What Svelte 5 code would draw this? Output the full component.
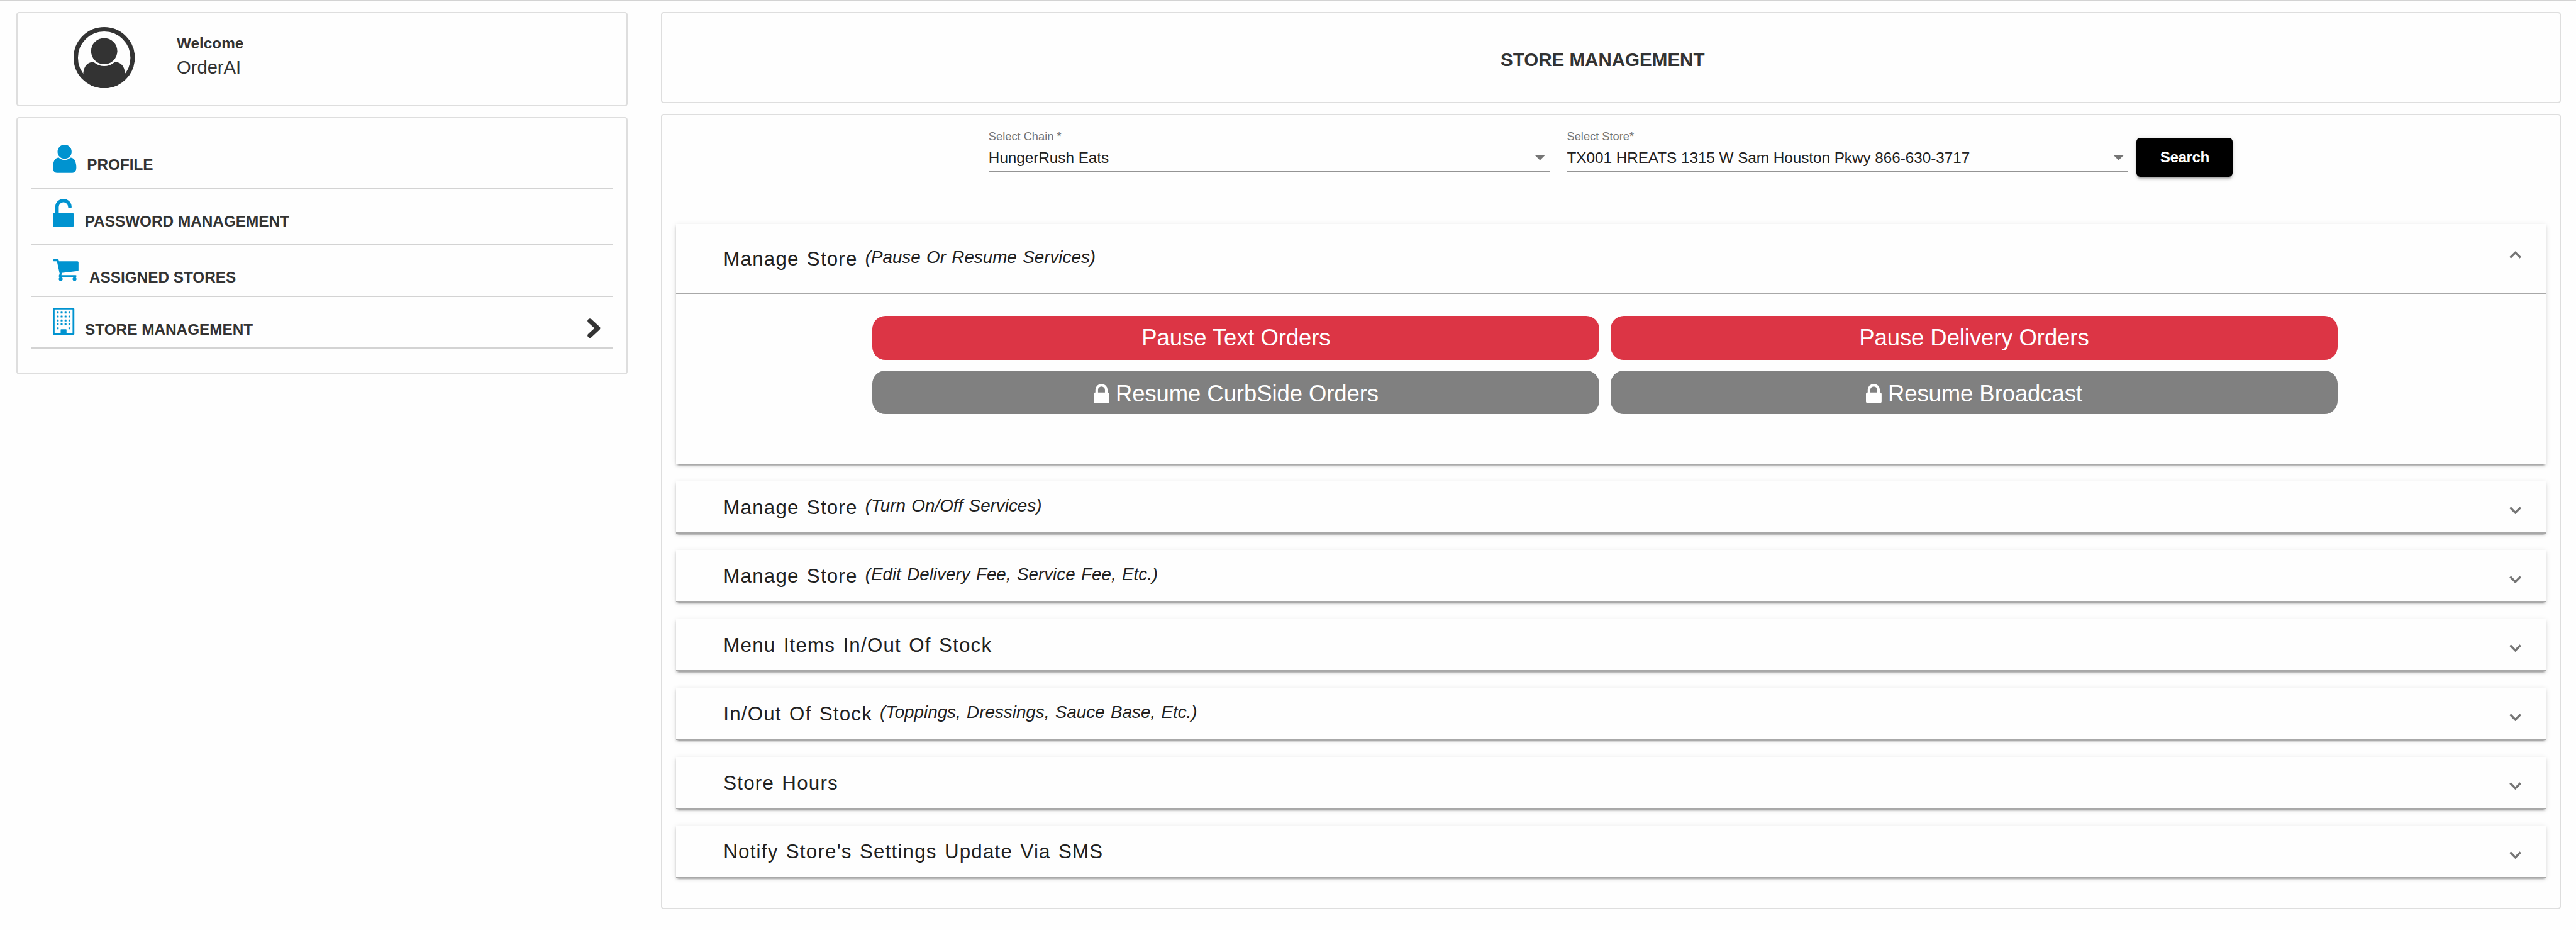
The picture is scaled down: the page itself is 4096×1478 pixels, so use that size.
<script>
  const menu = [
    { id: 'profile', label: 'PROFILE' },
    { id: 'password', label: 'PASSWORD MANAGEMENT' },
    { id: 'stores', label: 'ASSIGNED STORES' },
    { id: 'management', label: 'STORE MANAGEMENT', active: true },
  ];

  const windows = [256, 512, 768, 1024, 1280].flatMap((y) =>
    [256, 512, 768, 1024]
      .filter((x) => y < 1280 || x === 256 || x === 1024)
      .map((x) => ({ x, y }))
  );

  const fields = [
    { label: 'Select Chain *', value: 'HungerRush Eats' },
    { label: 'Select Store*', value: 'TX001 HREATS 1315 W Sam Houston Pkwy 866-630-3717' },
  ];

  const services = [
    { label: 'Pause Text Orders', locked: false },
    { label: 'Pause Delivery Orders', locked: false },
    { label: 'Resume CurbSide Orders', locked: true },
    { label: 'Resume Broadcast', locked: true },
  ];

  const panels = [
    { title: 'Manage Store', note: '(Pause Or Resume Services)', open: true },
    { title: 'Manage Store', note: '(Turn On/Off Services)' },
    { title: 'Manage Store', note: '(Edit Delivery Fee, Service Fee, Etc.)' },
    { title: 'Menu Items In/Out Of Stock' },
    { title: 'In/Out Of Stock', note: '(Toppings, Dressings, Sauce Base, Etc.)' },
    { title: 'Store Hours' },
    { title: "Notify Store's Settings Update Via SMS" },
  ];
</script>

<div class="page">
  <aside class="sidebar">
    <section class="card welcome">
      <svg class="avatar" viewBox="0 0 112 112">
        <circle cx="56" cy="56" r="52" fill="none" stroke="currentColor" stroke-width="8" />
        <circle cx="56" cy="44" r="24" />
        <path d="M17.7 84C19 72 25 64 35 64q2 0 3.5 1.3A28 28 0 0 0 73.5 65.3Q75 64 77 64c10 0 16 8 17.3 20L92 94A52 52 0 0 1 20 94Z" />
      </svg>
      <div class="who">
        <strong>Welcome</strong>
        <span>OrderAI</span>
      </div>
    </section>

    <nav class="card menu">
      {#each menu as item}
        <a class="item {item.id}">
          {#if item.id === 'profile'}
            <svg class="icon" viewBox="256 128 1280 1536"><path d="M1536 1399q0 109-62.5 187t-150.5 78h-854q-88 0-150.5-78t-62.5-187q0-85 8.5-160.5t31.5-152 58.5-131 94-89 134.5-34.5q131 128 313 128t313-128q76 0 134.5 34.5t94 89 58.5 131 31.5 152 8.5 160.5zm-256-887q0 159-112.5 271.5t-271.5 112.5-271.5-112.5-112.5-271.5 112.5-271.5 271.5-112.5 271.5 112.5 112.5 271.5z" /></svg>
          {:else if item.id === 'password'}
            <svg class="icon" viewBox="320 0 1152 1536"><path d="M1376 768q40 0 68 28t28 68v576q0 40-28 68t-68 28h-960q-40 0-68-28t-28-68v-576q0-40 28-68t68-28h32v-320q0-185 131.5-316.5t316.5-131.5 316.5 131.5 131.5 316.5q0 26-19 45t-45 19h-64q-26 0-45-19t-19-45q0-106-75-181t-181-75-181 75-75 181v320h736z" /></svg>
          {:else if item.id === 'stores'}
            <svg class="icon" viewBox="64 256 1664 1408"><path d="M704 1536q0 52-38 90t-90 38-90-38-38-90 38-90 90-38 90 38 38 90zm896 0q0 52-38 90t-90 38-90-38-38-90 38-90 90-38 90 38 38 90zm128-1088v512q0 24-16.5 42.5t-40.5 21.5l-1044 122q13 60 13 70 0 16-24 64h920q26 0 45 19t19 45-19 45-45 19h-1024q-26 0-45-19t-19-45q0-11 8-31.5t16-36 21.5-40 15.5-29.5l-177-823h-204q-26 0-45-19t-19-45 19-45 45-19h256q16 0 28.5 6.5t19.5 15.5 13 24.5 8 26 5.5 29.5 4.5 26h1201q26 0 45 19t19 45z" /></svg>
          {:else}
            <svg class="icon" viewBox="0 0 1408 1792">
              <rect x="58" y="58" width="1292" height="1676" rx="24" fill="none" stroke="currentColor" stroke-width="116" />
              <path d="M512 1440q0-32 32-32h320q32 0 32 32v270h-384z" />
              {#each windows as w}
                <rect x={w.x} y={w.y} width="128" height="128" rx="26" />
              {/each}
            </svg>
          {/if}
          <span>{item.label}</span>
          {#if item.active}
            <svg class="current" viewBox="0 0 24 36"><path d="M4.6 4.6L19.2 18L4.6 31.4" fill="none" stroke="currentColor" stroke-width="8.4" stroke-linecap="round" stroke-linejoin="round" /></svg>
          {/if}
        </a>
      {/each}
    </nav>
  </aside>

  <main class="main">
    <header class="card title">STORE MANAGEMENT</header>

    <section class="card content">
      <form class="filters">
        {#each fields as field}
          <div class="field">
            <span class="label">{field.label}</span>
            <div class="value">
              <span>{field.value}</span>
              <svg class="caret" viewBox="0 0 20 10"><path d="M0 0h20L10 10z" /></svg>
            </div>
          </div>
        {/each}
        <button type="button" class="search">Search</button>
      </form>

      <div class="accordion">
        {#each panels as panel}
          <article class="panel" class:open={panel.open}>
            <div class="head">
              <span class="name">{panel.title}</span>
              {#if panel.note}<em>{panel.note}</em>{/if}
              <svg class="chevron" viewBox="0 0 22 14"><path d="M1.6 1.8L11 11.2L20.4 1.8" fill="none" stroke="currentColor" stroke-width="4" /></svg>
            </div>
            {#if panel.open}
              <div class="services">
                {#each services as service}
                  <button type="button" class="service" class:locked={service.locked}>
                    {#if service.locked}
                      <svg class="lock" viewBox="320 128 1152 1408"><path d="M640 768h512v-192q0-106-75-181t-181-75-181 75-75 181v192zm832 96v576q0 40-28 68t-68 28h-960q-40 0-68-28t-28-68v-576q0-40 28-68t68-28h32v-192q0-184 132-316t316-132 316 132 132 316v192h32q40 0 68 28t28 68z" /></svg>
                    {/if}
                    <span>{service.label}</span>
                  </button>
                {/each}
              </div>
            {/if}
          </article>
        {/each}
      </div>
    </section>
  </main>
</div>

<style>
  /* The layout is drawn on a 4712-unit wide grid: 1rem equals 100 units. */
  :global(html) {
    font-size: calc(100vw / 47.12);
  }
  :global(body) {
    background: #fefefe;
    overflow: hidden;
  }
  .page,
  .page :global(*) {
    box-sizing: border-box;
  }
  .page {
    display: flex;
    align-items: flex-start;
    gap: 0.61rem;
    height: 17rem;
    padding: 0.2rem 0.28rem 0 0.3rem;
    border-top: 2px solid #d3d3d3;
    font-family: 'Liberation Sans', Arial, sans-serif;
    font-size: 0.28rem;
    line-height: 1;
    color: #333;
    white-space: nowrap;
  }
  svg {
    display: block;
    flex: none;
    fill: currentColor;
  }
  button {
    border: 0;
    margin: 0;
    padding: 0;
    font: inherit;
    color: #fff;
  }
  .card {
    border: 2px solid #dedede;
    border-radius: 0.05rem;
  }
  .sidebar {
    display: flex;
    flex: none;
    flex-direction: column;
    gap: 0.2rem;
    width: 11.18rem;
  }
  .welcome {
    display: flex;
    height: 1.72rem;
    padding: 0.25rem 1.02rem;
    gap: 0.77rem;
  }
  .avatar {
    width: 1.12rem;
    height: 1.12rem;
  }
  .who {
    display: flex;
    flex-direction: column;
    padding-top: 0.163rem;
    gap: 0.128rem;
  }
  .who span {
    font-size: 0.336rem;
  }
  .menu {
    height: 4.7rem;
    padding: 0 0.25rem;
  }
  .item {
    display: flex;
    align-items: flex-end;
    height: 1.03rem;
    padding: 0 0.222rem 0.267rem 0.397rem;
    border-bottom: 2px solid #d3d3d3;
    font-weight: bold;
  }
  .item.profile {
    height: 1.28rem;
  }
  .item.stores,
  .item.management {
    height: 0.95rem;
    padding-bottom: 0.187rem;
  }
  .icon {
    color: #0093d0;
  }
  .profile .icon {
    width: 0.43rem;
    height: 0.515rem;
    margin: 0 0.19rem -0.01rem 0;
  }
  .password .icon {
    width: 0.388rem;
    height: 0.514rem;
    margin: 0 0.192rem 0.033rem 0;
  }
  .stores .icon {
    width: 0.47rem;
    height: 0.398rem;
    margin: 0 0.193rem 0.075rem 0;
  }
  .management .icon {
    width: 0.394rem;
    height: 0.502rem;
    margin: 0 0.19rem 0.04rem 0;
  }
  .current {
    width: 0.24rem;
    height: 0.36rem;
    margin: 0 0 -0.017rem auto;
  }
  .main {
    display: flex;
    flex: 1;
    flex-direction: column;
    gap: 0.2rem;
  }
  .title {
    display: flex;
    align-items: center;
    justify-content: center;
    height: 1.66rem;
    padding: 0.065rem 0.3rem 0 0;
    font-size: 0.34rem;
    font-weight: bold;
  }
  .content {
    height: 14.54rem;
    padding: 0.29rem 0.25rem 0;
  }
  .filters {
    display: flex;
    height: 1.7rem;
    padding-left: 5.72rem;
    color: #212121;
  }
  .field {
    display: flex;
    flex-direction: column;
    width: 10.26rem;
    height: 0.75rem;
    margin-right: 0.32rem;
    border-bottom: 2px solid #949494;
  }
  .field:nth-child(2) {
    margin-right: 0.16rem;
  }
  .label {
    font-size: 0.21rem;
    color: #757575;
  }
  .value {
    display: flex;
    justify-content: space-between;
    padding-top: 0.14rem;
    padding-right: 0.07rem;
    letter-spacing: -0.0006rem;
  }
  .caret {
    width: 0.2rem;
    height: 0.1rem;
    margin-top: 0.08rem;
    color: #757575;
  }
  .search {
    width: 1.76rem;
    height: 0.72rem;
    margin-top: 0.12rem;
    border-radius: 0.07rem;
    background: #000;
    box-shadow:
      0 0.06rem 0.02rem -0.04rem rgba(0, 0, 0, 0.2),
      0 0.04rem 0.04rem rgba(0, 0, 0, 0.14),
      0 0.02rem 0.1rem rgba(0, 0, 0, 0.12);
    font-weight: bold;
    letter-spacing: -0.006rem;
  }
  .accordion {
    display: flex;
    flex-direction: column;
    gap: 0.3rem;
    color: #212121;
  }
  .panel {
    height: 0.96rem;
    background: #fefefe;
    box-shadow:
      0 0.06rem 0.02rem -0.04rem rgba(0, 0, 0, 0.2),
      0 0.04rem 0.04rem rgba(0, 0, 0, 0.14),
      0 0.02rem 0.1rem rgba(0, 0, 0, 0.12);
  }
  .panel.open {
    height: 4.4rem;
  }
  .head {
    display: flex;
    align-items: center;
    height: 0.96rem;
    padding: 0.025rem 0.45rem 0 0.87rem;
    border-bottom: 2px solid #a8a8a8;
  }
  .open .head {
    height: 1.28rem;
  }
  .name {
    font-size: 0.36rem;
    letter-spacing: 0.014rem;
    word-spacing: 0.027rem;
  }
  em {
    margin-left: 0.137rem;
    padding-bottom: 0.06rem;
    font-size: 0.32rem;
    word-spacing: 0.019rem;
  }
  .chevron {
    width: 0.22rem;
    height: 0.14rem;
    margin: 0.11rem 0 0 auto;
    color: #757575;
  }
  .open .chevron {
    margin: -0.15rem 0 0 auto;
    transform: scaleY(-1);
  }
  .services {
    display: grid;
    grid-template-columns: 13.3rem 13.3rem;
    gap: 0.2rem;
    justify-content: center;
    padding: 0.4rem 0 0 0;
    margin-right: 0.21rem;
  }
  .service {
    display: flex;
    align-items: center;
    justify-content: center;
    height: 0.8rem;
    padding-top: 0.01rem;
    border-radius: 0.24rem;
    background: #dc3545;
    font-size: 0.42rem;
    letter-spacing: -0.001rem;
  }
  .service.locked {
    gap: 0.117rem;
    padding-top: 0.065rem;
    background: #808080;
  }
  .lock {
    width: 0.286rem;
    height: 0.35rem;
    margin-top: -0.03rem;
  }
</style>
